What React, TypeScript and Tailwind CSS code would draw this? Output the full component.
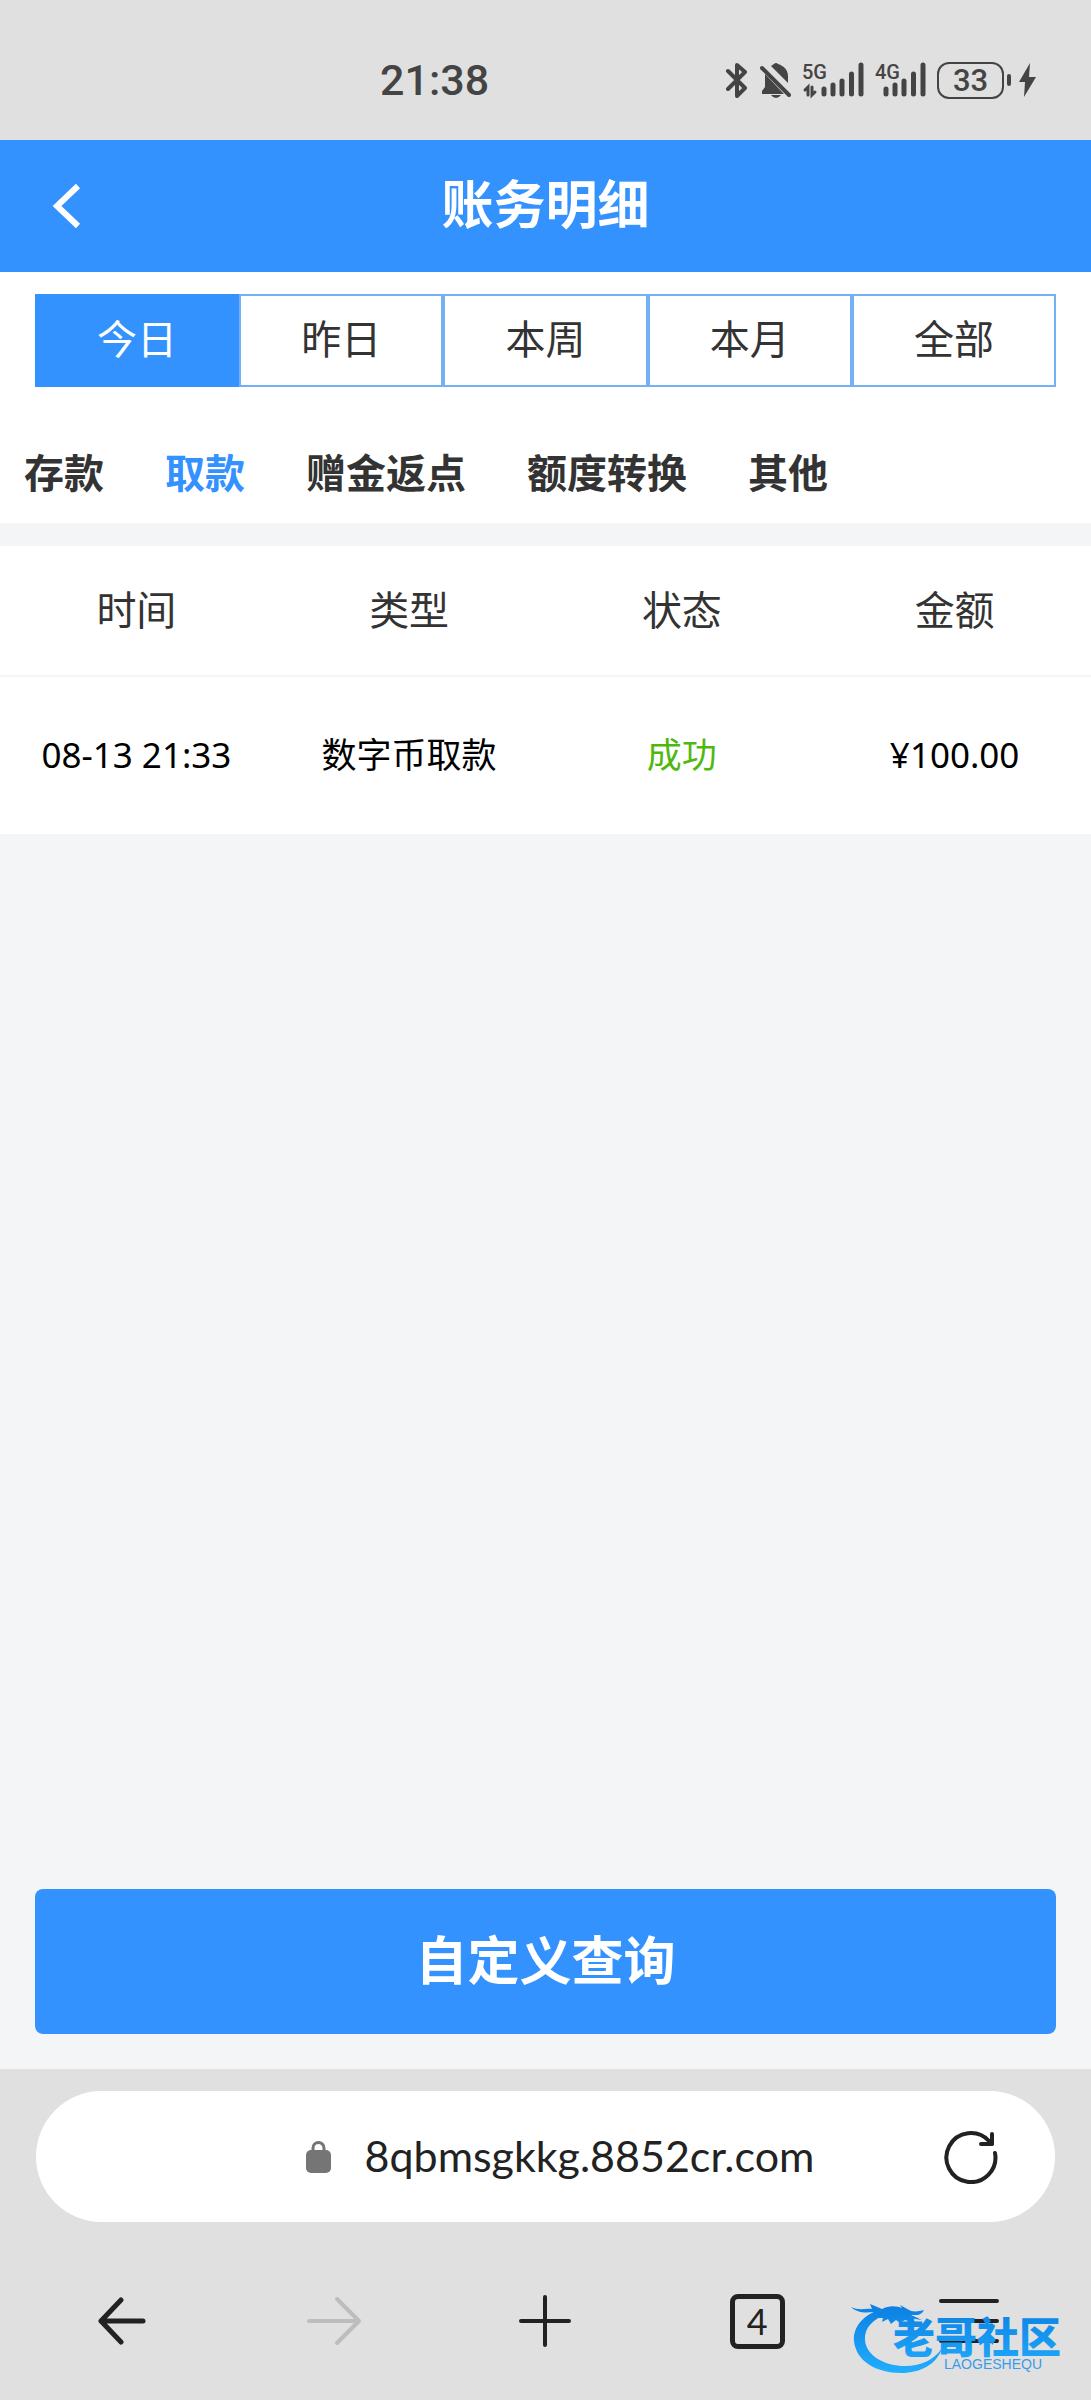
import { useState } from 'react'

const PERIODS = ['今日', '昨日', '本周', '本月', '全部']
const CATEGORIES = ['存款', '取款', '赠金返点', '额度转换', '其他']
const COLUMNS = ['时间', '类型', '状态', '金额']
const RECORDS = [{ time: '08-13 21:33', type: '数字币取款', status: '成功', amount: '¥100.00' }]

function Signal({ label, data }: { label: string; data?: boolean }) {
    return (
        <svg width={data ? 62 : 51} height="48" viewBox={data ? '0 -6 62 48' : '11 -6 51 48'} fill="none" stroke="#444" strokeLinecap="round">
            <text x={data ? 0 : 11} y="17" fontSize="20" fontWeight="500" fontFamily="Roboto, sans-serif" fill="#444" stroke="none">{label}</text>
            <g strokeWidth="5">
                <path d="M22 27v5M31 23v9M40 19v13M49.500 12v20M59 3v29" />
            </g>
            {data && <path d="M6 33v-8l-3 3M10 25v8l3-3" strokeWidth="3" />}
        </svg>
    )
}

function StatusBar() {
    return (
        <div className="flex h-[140px] items-center justify-between bg-[#e0e0e0] pt-5 pr-[55px] pl-[380px] text-[#444]">
            <span className="font-['Roboto',sans-serif] text-[43px] leading-none font-medium">21:38</span>
            <div className="flex items-center gap-[11px]">
                <svg width="24" height="36" viewBox="0 0 24 36" fill="none" stroke="#444" strokeWidth="4" strokeLinecap="round" strokeLinejoin="round">
                    <path d="M3 9l17 17-8 8V3l8 7L3 27" />
                </svg>
                <svg width="31" height="36" viewBox="0 0 31 36" fill="#444">
                    <path d="M11 4C12 3 13 3 14 2q2-2 4 0c6 2 10 6 10 12v7zM5 12l19 20H2v-3l3-4zM11 33h10q-2 3-5 3t-5-3z" />
                    <path d="M2 6l27 27" stroke="#444" strokeWidth="4" strokeLinecap="round" />
                </svg>
                <Signal label="5G" data />
                <Signal label="4G" />
                <div className="flex items-center gap-[3px]">
                    <div className="flex h-[37px] w-[67px] items-center justify-center rounded-xl border-2 border-[#444] font-['Roboto',sans-serif] text-[31px] leading-none font-medium">33</div>
                    <div className="h-3 w-1 rounded-full bg-[#444]" />
                    <svg className="ml-1" width="18" height="36" viewBox="0 0 18 36" fill="#444">
                        <path d="M12 1L1 20h6L6 35 18 15h-7z" />
                    </svg>
                </div>
            </div>
        </div>
    )
}

function Watermark() {
    return (
        <svg className="pointer-events-none absolute right-4 bottom-6 h-[76px] w-[224px]" viewBox="0 0 224 76" aria-hidden="true">
            <defs>
                <linearGradient id="wm" x1="0" y1="0" x2="0" y2="76" gradientUnits="userSpaceOnUse">
                    <stop offset="0" stopColor="#0a7ce0" />
                    <stop offset="1" stopColor="#22b0ff" />
                </linearGradient>
            </defs>
            <g fill="url(#wm)">
                <path d="M30 9C12 15 2 27 3 41c2 20 22 32 47 32 20 0 36-9 41-25-7 11-20 18-37 18C34 66 15 56 14 40c-1-12 8-21 22-26z" />
                <path d="M0 7c8 4 14 1 21 2l-2-5 12 5c7-4 15-3 20-1l-2-3 11 6c5 1 9 0 13-1-3 6-8 5-13 5l11 5-13-2 10 6-14-4-5 3-4-3-5 4-3-5-6 3 1-4-6 0 2-4-6-2C15 13 6 13 0 7z" />
            </g>
            <text x="42" y="53" fontSize="42" fontWeight="900" fontFamily="Noto Sans CJK SC, sans-serif" fill="url(#wm)">老哥社区</text>
            <text x="93" y="69" fontSize="14" fontFamily="Liberation Sans, sans-serif" fill="#3a9be8">LAOGESHEQU</text>
        </svg>
    )
}

export default function App() {
    const [period, setPeriod] = useState('今日')
    const [category, setCategory] = useState('取款')

    return (
        <div className="flex min-h-screen flex-col bg-[#f4f5f7] font-['Noto_Sans_CJK_SC',sans-serif] text-[#333]">
            <StatusBar />
            <header className="grid h-[132px] grid-cols-[1fr_auto_1fr] items-center bg-[#3492ff] px-[52px] text-white">
                <button type="button" aria-label="返回">
                    <svg width="30" height="46" viewBox="0 0 30 46" fill="none" stroke="currentColor" strokeWidth="6">
                        <path d="M26 3L5 23l21 20" />
                    </svg>
                </button>
                <h1 className="pb-2 text-[52px] leading-none font-bold">账务明细</h1>
            </header>

            <div className="bg-white">
                <div className="grid grid-cols-5 px-[35px] pt-[22px]">
                    {PERIODS.map((p) => (
                        <button
                            key={p}
                            type="button"
                            onClick={() => setPeriod(p)}
                            className={`h-[93px] border-2 pb-2 text-[40px] ${p === period ? 'border-[#3492ff] bg-[#3492ff] text-white' : 'border-[#73b0f5] bg-white'}`}
                        >
                            {p}
                        </button>
                    ))}
                </div>
                <nav className="flex h-[136px] items-center gap-[61px] px-6 pt-8 text-[40px] font-bold">
                    {CATEGORIES.map((c) => (
                        <button key={c} type="button" onClick={() => setCategory(c)} className={c === category ? 'text-[#3492ff]' : ''}>
                            {c}
                        </button>
                    ))}
                </nav>
            </div>

            <table className="mt-[23px] w-full table-fixed bg-white text-center">
                <thead>
                    <tr className="h-[130px] border-b-2 border-[#f4f5f7] text-[40px]">
                        {COLUMNS.map((c) => (
                            <th key={c} className="pb-1.5 font-normal">{c}</th>
                        ))}
                    </tr>
                </thead>
                <tbody>
                    {RECORDS.map((r) => (
                        <tr key={r.time} className="h-[158px] font-['Noto_Sans','Noto_Sans_CJK_SC',sans-serif] text-[35px] text-black">
                            <td>{r.time}</td>
                            <td>{r.type}</td>
                            <td className="text-[#4fb80f]">{r.status}</td>
                            <td>{r.amount}</td>
                        </tr>
                    ))}
                </tbody>
            </table>

            <div className="mt-auto px-[35px] pb-[35px]">
                <button type="button" className="h-[145px] w-full rounded-lg bg-[#3492ff] pb-2 text-[52px] font-bold text-white">
                    自定义查询
                </button>
            </div>

            <footer className="relative bg-[#e0e0e0] pt-[22px] text-[#222]">
                <div className="mx-9 flex h-[131px] items-center rounded-full bg-white pr-[57px] pl-[140px]">
                    <div className="flex flex-1 items-center justify-center gap-[34px]">
                        <svg width="25" height="32" viewBox="0 0 25 32">
                            <rect y="9" width="25" height="23" rx="5" fill="#757575" />
                            <path d="M7 10V7a5 5 0 0 1 11 0v3" fill="none" stroke="#757575" strokeWidth="3" />
                        </svg>
                        <span className="font-['Lato',sans-serif] text-[43px]">8qbmsgkkg.8852cr.com</span>
                    </div>
                    <button type="button" aria-label="刷新">
                        <svg width="54" height="54" viewBox="0 0 54 54" fill="none" stroke="currentColor" strokeWidth="4" strokeLinecap="round" strokeLinejoin="round">
                            <path d="M51 23A24.500 24.500 0 1 1 45 11L48 14M48 4v10H37" />
                        </svg>
                    </button>
                </div>
                <nav className="grid h-[178px] grid-cols-5 items-center px-4 pt-5">
                    <button type="button" aria-label="后退" className="justify-self-center">
                        <svg width="48" height="48" viewBox="0 0 48 48" fill="none" stroke="currentColor" strokeWidth="5" strokeLinecap="round" strokeLinejoin="round">
                            <path d="M23 3L3 24l20 21M3 24h42" />
                        </svg>
                    </button>
                    <button type="button" aria-label="前进" className="justify-self-center text-[#bdbdbd]">
                        <svg width="56" height="50" viewBox="0 0 56 50" fill="none" stroke="currentColor" strokeWidth="4" strokeLinecap="round" strokeLinejoin="round">
                            <path d="M31 3l22 22-22 22M53 25H3" />
                        </svg>
                    </button>
                    <button type="button" aria-label="新建标签页" className="justify-self-center">
                        <svg width="54" height="54" viewBox="0 0 54 54" fill="none" stroke="currentColor" strokeWidth="4" strokeLinecap="round">
                            <path d="M27 3v48M3 27h48" />
                        </svg>
                    </button>
                    <button type="button" aria-label="标签页" className="flex size-[55px] items-center justify-center justify-self-center rounded-lg border-5 border-current font-['Lato',sans-serif] text-[36px] leading-none">
                        4
                    </button>
                    <button type="button" aria-label="菜单" className="justify-self-center">
                        <svg width="62" height="44" viewBox="0 0 62 44" fill="none" stroke="currentColor" strokeWidth="4" strokeLinecap="round">
                            <path d="M3 2h56M3 22h56M3 42h56" />
                        </svg>
                    </button>
                </nav>
                <Watermark />
            </footer>
        </div>
    )
}
